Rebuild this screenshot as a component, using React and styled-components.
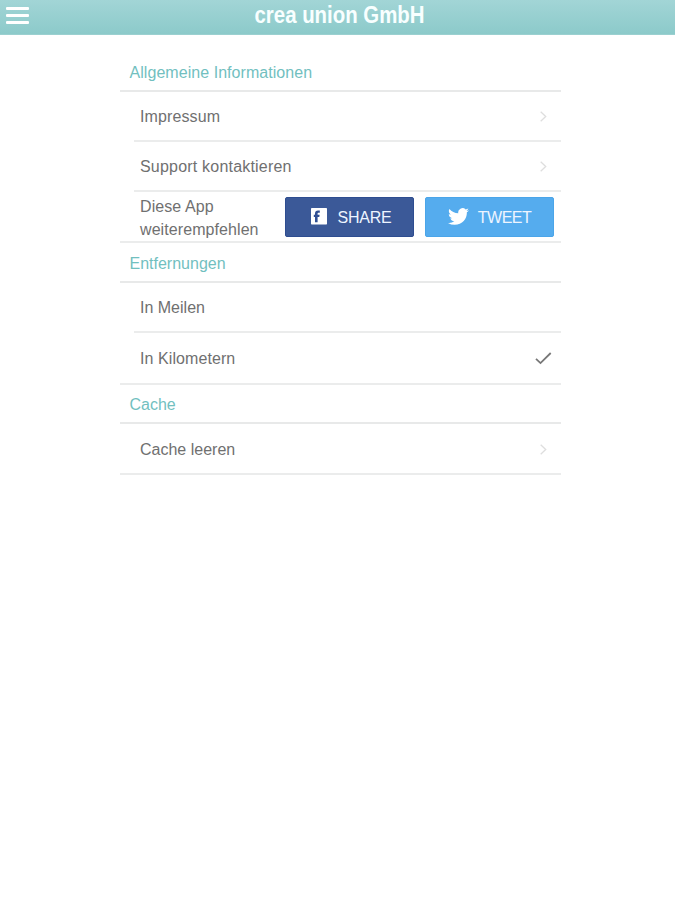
import React from "react";
import styled, { createGlobalStyle } from "styled-components";

const GlobalStyle = createGlobalStyle`
  * { box-sizing: border-box; }
  body {
    margin: 0;
    background: #fff;
    font-family: "Liberation Sans", Arial, sans-serif;
  }
`;

const Page = styled.div`
  min-height: 900px;
  background: #fff;
`;

const Header = styled.header`
  display: grid;
  grid-template-columns: 40px 1fr 40px;
  height: 35px;
  background: linear-gradient(#a2d5d6, #8ccaca);
  border-bottom: 1px solid #9bd0d0;
`;

const MenuButton = styled.button`
  display: flex;
  flex-direction: column;
  gap: 4px;
  padding: 7px 0 0 6px;
  border: 0;
  background: none;
`;

const MenuBar = styled.span`
  width: 23px;
  height: 3px;
  border-radius: 1px;
  background: #fff;
`;

const Title = styled.h1`
  margin: 0;
  justify-self: center;
  font-size: 24px;
  line-height: 30px;
  font-weight: 700;
  color: #f8ffff;
  white-space: nowrap;
  transform: translateX(2.5px) scaleX(0.85);
`;

const Settings = styled.main`
  width: 441px;
  margin: 0 0 0 120px;
  padding-top: 18px;
`;

const SectionTitle = styled.h2`
  display: flex;
  align-items: center;
  height: ${(p) => p.$height}px;
  margin: 0;
  padding: ${(p) => p.$top ?? 2}px 0 0 9.5px;
  border-bottom: 2px solid #e8e9e9;
  font-size: 16px;
  font-weight: 400;
  letter-spacing: ${(p) => p.$spacing || 0}px;
  color: #72bfbf;
`;

const Row = styled.div`
  display: flex;
  align-items: center;
  justify-content: space-between;
  height: ${(p) => p.$height}px;
  margin-left: ${(p) => (p.$last ? 0 : 14)}px;
  padding-top: ${(p) => p.$top || 0}px;
  padding-left: ${(p) => (p.$last ? 20 : 6)}px;
  padding-right: ${(p) => p.$end ?? 14}px;
  border-bottom: 2px solid #ebecec;
`;

const Label = styled.span`
  font-size: 16px;
  line-height: 23px;
  letter-spacing: ${(p) => p.$spacing || 0}px;
  color: #707070;
`;

const ShareLabel = styled(Label)`
  padding-top: 2px;
`;

const Actions = styled.div`
  display: flex;
  gap: 11px;
`;

const SocialButton = styled.button`
  display: flex;
  align-items: center;
  justify-content: center;
  gap: ${(p) => p.$gap}px;
  width: 129px;
  height: 40px;
  padding: 0 0 0 ${(p) => p.$shift}px;
  border: 1px solid ${(p) => p.$edge};
  border-radius: 2px;
  background: ${(p) => p.$color};
  color: #eef5ff;
  font: 16px "Liberation Sans", Arial, sans-serif;
  letter-spacing: ${(p) => p.$spacing}px;
`;

const ButtonText = styled.span`
  padding-top: 2px;
`;

const Chevron = () => (
  <svg width="7" height="11" viewBox="0 0 7 11" fill="none" stroke="#dedede" strokeWidth="1.3">
    <path d="M.7.8l5 4.7-5 4.7" />
  </svg>
);

const Check = () => (
  <svg width="17" height="13" viewBox="0 0 17 13" fill="none" stroke="#777" strokeWidth="1.8">
    <path d="M1 6.9l4.5 4.2L15.7 1" />
  </svg>
);

const FacebookIcon = () => (
  <svg width="16" height="17" viewBox="0 0 16 17">
    <rect width="16" height="16.5" rx="0.7" fill="#fff" />
    <path
      d="M4 14.2V8.9H2.8V6.8H4V5.6c0-2.2 1.1-3.1 3-3.1h1.8v2.2H7.7c-.8 0-1.1.3-1.1 1v1.1h2l-.3 2.1H6.6v5.3z"
      fill="#304f94"
    />
  </svg>
);

const TwitterIcon = () => (
  <svg width="21" height="17" viewBox="0 2 24 20" preserveAspectRatio="none" fill="#fff">
    <path d="M23.95 4.57a10 10 0 0 1-2.82.77 4.96 4.96 0 0 0 2.16-2.72c-.95.55-2 .95-3.13 1.18a4.92 4.92 0 0 0-8.38 4.48C7.69 8.09 4.07 6.13 1.64 3.16a4.82 4.82 0 0 0-.67 2.48c0 1.71.87 3.21 2.19 4.1a4.9 4.9 0 0 1-2.23-.62v.06a4.92 4.92 0 0 0 3.95 4.83 5 5 0 0 1-2.21.08 4.94 4.94 0 0 0 4.6 3.42A9.87 9.87 0 0 1 0 19.54a13.99 13.99 0 0 0 7.55 2.21c9.05 0 14-7.5 14-13.98 0-.21 0-.42-.02-.63a9.94 9.94 0 0 0 2.42-2.57z" />
  </svg>
);

export default function App() {
  return (
    <Page>
      <GlobalStyle />
      <Header>
        <MenuButton aria-label="Menü">
          <MenuBar />
          <MenuBar />
          <MenuBar />
        </MenuButton>
        <Title>crea union GmbH</Title>
      </Header>
      <Settings>
        <SectionTitle $height={39} $spacing={0.05}>Allgemeine Informationen</SectionTitle>
        <Row $height={50}>
          <Label $spacing={0.12}>Impressum</Label>
          <Chevron />
        </Row>
        <Row $height={50}>
          <Label $spacing={0.2}>Support kontaktieren</Label>
          <Chevron />
        </Row>
        <Row $height={51} $last $end={7}>
          <ShareLabel $spacing={0.08}>
            Diese App
            <br />
            weiterempfehlen
          </ShareLabel>
          <Actions>
            <SocialButton $color="#3b5998" $edge="#2e4d90" $gap={10} $spacing={-0.2} $shift={4}>
              <FacebookIcon />
              <ButtonText>SHARE</ButtonText>
            </SocialButton>
            <SocialButton $color="#55acee" $edge="#4ba5e9" $gap={9} $spacing={-0.5} $shift={0}>
              <TwitterIcon />
              <ButtonText>TWEET</ButtonText>
            </SocialButton>
          </Actions>
        </Row>
        <SectionTitle $height={40} $top={3}>Entfernungen</SectionTitle>
        <Row $height={50}>
          <Label>In Meilen</Label>
        </Row>
        <Row $height={52} $last $end={9}>
          <Label $spacing={0.08}>In Kilometern</Label>
          <Check />
        </Row>
        <SectionTitle $height={39}>Cache</SectionTitle>
        <Row $height={51} $last $top={1}>
          <Label>Cache leeren</Label>
          <Chevron />
        </Row>
      </Settings>
    </Page>
  );
}
